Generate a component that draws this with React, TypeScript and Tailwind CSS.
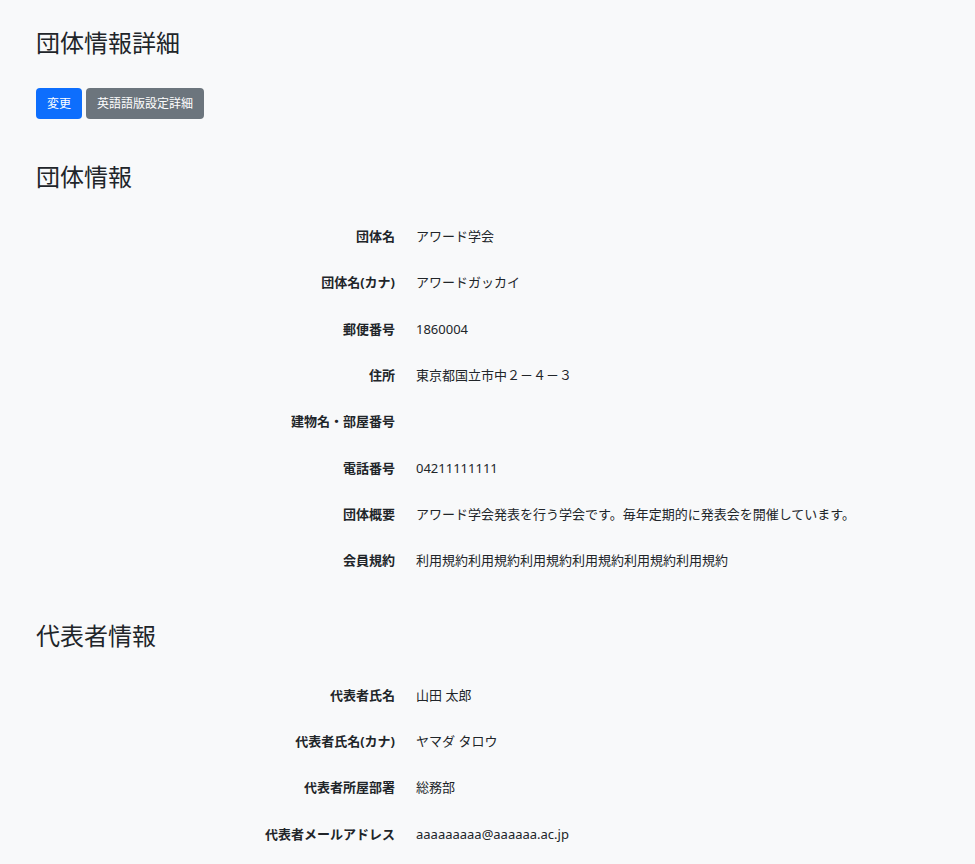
const groupRows: [string, string][] = [
  ['団体名', 'アワード学会'],
  ['団体名(カナ)', 'アワードガッカイ'],
  ['郵便番号', '1860004'],
  ['住所', '東京都国立市中２－４－３'],
  ['建物名・部屋番号', ''],
  ['電話番号', '04211111111'],
  ['団体概要', 'アワード学会発表を行う学会です。毎年定期的に発表会を開催しています。'],
  ['会員規約', '利用規約利用規約利用規約利用規約利用規約利用規約'],
]

const repRows: [string, string][] = [
  ['代表者氏名', '山田 太郎'],
  ['代表者氏名(カナ)', 'ヤマダ タロウ'],
  ['代表者所屋部署', '総務部'],
  ['代表者メールアドレス', 'aaaaaaaaa@aaaaaa.ac.jp'],
]

function InfoList({ rows }: { rows: [string, string][] }) {
  return (
    <dl className="grid grid-cols-[359px_1fr] gap-x-[21px]">
      {rows.map(([label, value]) => (
        <div key={label} className="contents">
          <dt className="py-[13px] text-right text-[13px] font-bold leading-[20.33px]">{label}</dt>
          <dd className="py-[13px] text-[13px] leading-[20.33px]">{value}</dd>
        </div>
      ))}
    </dl>
  )
}

export default function App() {
  return (
    <div
      className="min-h-screen bg-[#f8f9fa] px-[36px] pt-[28px] pb-10 text-[#212529]"
      style={{ fontFamily: '"Noto Sans", "Noto Sans CJK JP", sans-serif' }}
    >
      <h1 className="text-[24px] font-normal leading-[30px]">団体情報詳細</h1>
      <div className="mt-[30px] flex gap-[4px]">
        <button className="h-[31px] rounded-[4px] bg-[#0d6efd] px-[11px] text-[12px] text-white">変更</button>
        <button className="h-[31px] rounded-[4px] bg-[#6c757d] px-[11px] text-[12px] text-white">
          英語語版設定詳細
        </button>
      </div>

      <h2 className="mt-[43px] text-[24px] font-normal leading-[30px]">団体情報</h2>
      <div className="mt-[21px]">
        <InfoList rows={groupRows} />
      </div>

      <h2 className="mt-[37px] text-[24px] font-normal leading-[30px]">代表者情報</h2>
      <div className="mt-[21px]">
        <InfoList rows={repRows} />
      </div>
    </div>
  )
}
